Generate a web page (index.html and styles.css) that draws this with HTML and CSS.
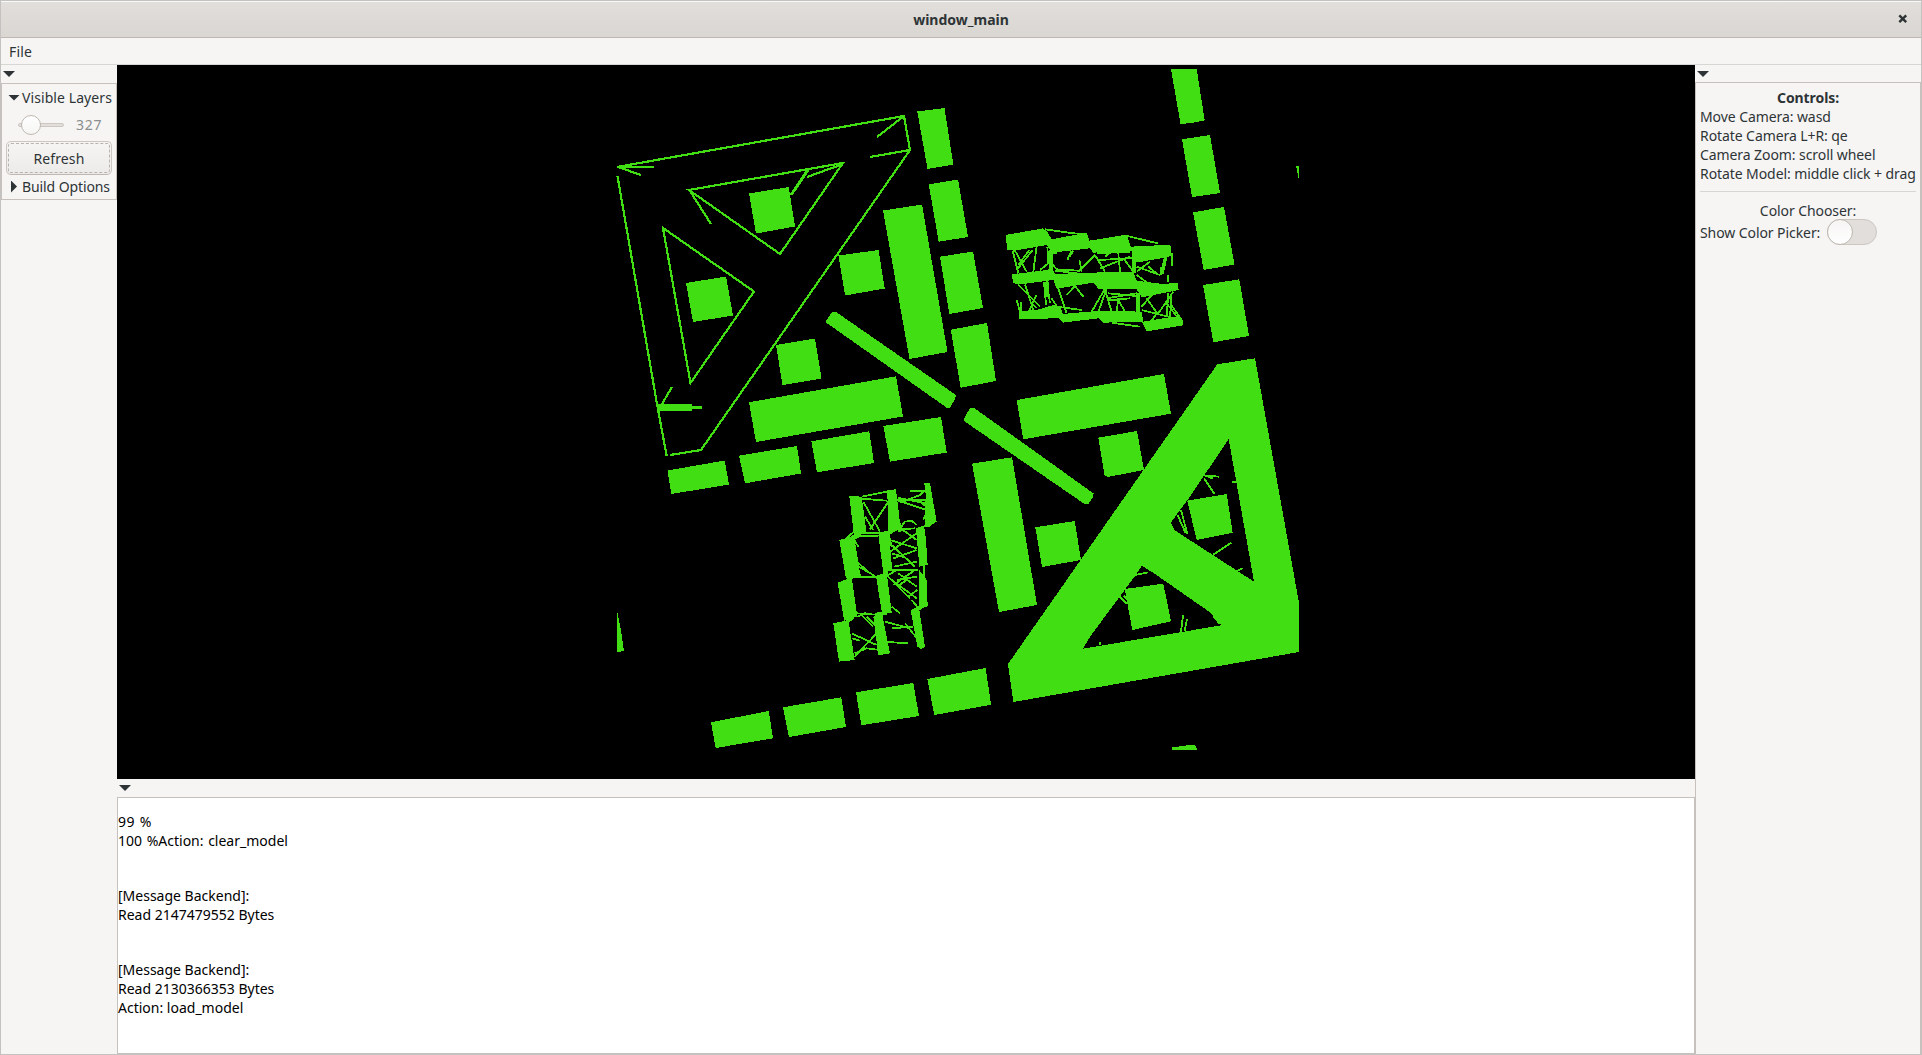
FILE: index.html
```
<!DOCTYPE html>
<html lang="en">
<head>
<meta charset="utf-8">
<title>window_main</title>
<link rel="stylesheet" href="styles.css">
</head>
<body>
<div class="window">
  <header class="titlebar">
    <h1 class="title">window_main</h1>
    <svg class="close" width="10" height="10" viewBox="0 0 10 10"><path d="M1.3 1.3 8.2 8.2M8.2 1.3 1.3 8.2"/></svg>
  </header>
  <nav class="menubar"><span class="menu-item">File</span></nav>
  <main class="body">
    <aside class="side left">
      <div class="expander"><i class="arrow down"></i></div>
      <section class="frame layers">
        <div class="row head"><i class="arrow down"></i><span class="t-layers">Visible Layers</span></div>
        <div class="row slider"><div class="trough"><i class="knob"></i></div><span class="value">327</span></div>
        <button class="button">Refresh</button>
        <div class="row build"><i class="arrow right"></i><span class="t-build">Build Options</span></div>
      </section>
    </aside>
    <div class="center">
      <svg class="viewport" viewBox="117 65 1578 714" width="1578" height="714" shape-rendering="crispEdges">
        <g class="solid">
          <path d="M749 193.500 788.700 187 795 226.500 756 233.500zM686 283 726 276.500 733 315.500 693 322zM838.500 255.500 878.500 250 884.700 288.500 845 295.500zM776 345 815 338.500 821.500 378.500 782.500 385z"/>
          <path d="M883 210.500 922 204.500 947.500 352 909.500 359zM749 402.300 896 376.300 903 416.500 756 442z"/>
          <path d="M667.500 470.500 724.700 460.500 729 484.500 671.300 494zM739 455.700 797 446 801 473.500 745 483.300zM811.300 441.300 869.300 431.300 874 463 817 472.300zM883.300 426 941 417 946.700 452.500 890 461.700z"/>
          <path d="M825.300 322 832 312 836 312 956 395 955 399 950 407.500 946.500 407.500zM964 418.500 970 408 974.500 408.300 1093.700 493.500 1093 497 1088.500 504 1084.500 504 964 421z"/>
          <path d="M917.300 111.500 944.500 108 953.300 164.500 927.500 169zM928.700 184.300 958 179.500 968 237 938.700 241.700zM940 256.700 973 251.500 983 308 949.300 314zM950.700 329.700 987 323 996 381 960.700 387.700z"/>
          <path d="M1171 69 1196.700 69 1204.700 120.300 1192 123 1180.500 124zM1182 139.300 1210 135 1220 193 1192 197zM1193 212.300 1224 207 1234.500 264.500 1203.700 270zM1203 285 1239.300 279.300 1249 336 1213.300 342.300z"/>
          <path d="M972 463.700 1012 457.300 1037 605 999 612zM1035.300 527.300 1074.700 521 1081 560 1042 567zM1016.700 400 1164 374 1171 413.700 1023.300 439.300zM1098.300 437.700 1137 431 1144 470 1107.700 477 1104.500 475z"/>
          <path d="M711 722.300 768.700 711 773 738.300 715.700 748zM783 707.300 841.300 697.300 846 727 789 737zM856 692.300 913.300 683 919 716 861.300 725.300zM927.300 679 985.700 668 991 704.700 934.300 715z"/>
          <path d="M617.300 612 621 630 624 651 617.300 652zM1296 166H1299V178H1298L1297 168H1296zM1172 747.500 1193 744.500 1196 746 1197 750 1172 750z"/>
          <path fill-rule="evenodd" d="M1217.300 364.300 1255 358.300 1299 603 1299 652 1013.300 702 1008 664zM1228.700 439 1254 581.700 1174.300 530 1170.700 522.700 1189 498zM1141.700 565.700 1155 574 1210 612.300 1221.300 625.300 1083 648.700 1090 636.700 1135 576z"/>
          <path d="M1187.300 500.700 1226.700 494 1232.700 532.700 1196.700 540zM1124.700 589 1163.300 583.700 1171 621.300 1132.300 630z"/>
          <path d="M657.500 404H692V406H701.500V409H692V410.500H657.500z"/>
        </g>
        <g class="wire">
          <path d="M617 167 904 116 910 150 701 450 670 455M666.700 456 657 404 617.500 176M618 167H654M618 167 641 175M904 116 877 137M910 150 870 157"/>
          <path d="M689 190 843 163 780 254zM690 191 711 224M843 164 807 177M663 228 754 291.500 690.500 383zM662 404 672 387"/>
          <path class="heavy" d="M808 170 791 195"/>
        </g>
        <g class="wire fine" transform="translate(1000 350) scale(.33333)">
          <path d="M605 376 658 380M620 378 640 386M612 385 644 433M543 480 562 552M533 495 556 548M640 614 694 578M710 663 728 655M696 396H708M405 675 445 667M358 738 380 762M372 738 382 748M549 796 543 845M561 808 554 843M640 800 660 822M300 876V886"/>
        </g>
        <g transform="translate(990 210) scale(.33333)">
          <path class="solid" d="M47 75 160 55 185 88 290 68 298 92 410 74 422 110 541 104 546 138 435 158 425 122 310 128 300 115 185 128 170 105 75 122 52 120zM67 193 170 180 185 172 195 192 300 188 430 185 440 212 520 222 563 218 566 240 455 262 440 238 325 236 310 218 200 236 190 210 85 224 68 218zM87 303 140 300 190 285 212 290 218 312 330 302 455 305 460 335 520 325 560 322 580 330 580 346 470 364 455 335 340 338 325 325 218 338 205 325 88 327z"/>
          <path class="wire fine" d="M165 58 250 70M165 60 180 85M250 70 285 72M412 78 503 100M68 122 85 190M75 122 110 185M128 120 80 180M118 120 85 165M140 108 130 185M172 110 175 160 150 180M185 130 200 130M185 160 200 178 265 182M245 122 232 150M250 122 238 142M268 150 275 185M315 135 265 185M315 135 345 185M320 130 420 125M325 150 425 145M330 175 420 140M345 140 360 128M385 130 390 185M400 145 430 185M440 170 510 195M440 185 480 155M475 170 505 195M525 140 512 195M530 140 520 185M545 130 546 168M440 155 525 140M535 195V215M440 195 475 220M195 182 260 190"/>
          <path class="wire fine" d="M85 224 150 290M105 224 130 300M80 270 90 305M92 275V305M140 255 118 300M125 280 140 295M162 215 168 285M170 212 180 280M205 235 230 310M185 265 200 288M230 255 255 228 280 260M200 290 275 300M345 236 305 305M350 236 325 305M345 240 365 305M355 250 440 258M350 265 440 250M350 272 420 265M385 265 380 305M385 270 405 305M455 290 490 250M470 265 505 315M550 245 505 310M535 250 530 320M545 250 540 320M540 280 575 330M530 280 565 325M455 300 575 330M480 340 500 310M365 338 450 350M445 215 500 232M470 240 490 220"/>
          <path class="wire thick" d="M182 120 184 190M432 120V190M445 250V310M170 215V260M516 170V192"/>
        </g>
        <g transform="translate(820 470) scale(.33333)">
          <path class="solid" d="M88 78 125 80 140 190 102 198zM58 210 102 198 122 320 78 325zM53 338 95 322 112 440 72 450zM40 460 85 450 104 570 57 575zM200 60 228 58 242 175 212 182zM175 195 205 183 217 300 190 310zM168 318 200 306 215 428 186 430zM160 440 186 430 210 550 175 556zM313 40 330 40 350 155 328 170 313 172 318 210 323 285 298 290 288 175 328 160zM298 300 320 330 323 408 298 420 315 530 303 537 292 530 272 420 298 408zM308 285H315V345H308z"/>
          <path class="wire fine" d="M125 80 205 64M125 86 200 92M205 95 150 178M130 95 180 185M135 140 160 180M208 100V185M135 190H180M75 208 102 185M80 215 100 195M102 200 175 197M100 205 115 230M122 320 108 285 165 318M110 275 150 310M95 322H165L190 315M112 440 138 428M72 450 112 430 180 435M125 435 160 470M140 440 165 465M95 490 170 525M95 505 120 512M170 490 104 560M104 550 140 535 180 540M185 470 165 490M228 90H320M235 84 320 100M235 92 335 125M270 62H320M240 98 300 75 315 62M300 95 325 115M320 125 310 150M240 175 255 155 275 152 290 165M215 180 285 175M242 175 290 210M205 190 215 230"/>
          <path class="wire fine" d="M210 210 290 235M210 245 290 190M215 225 285 290M220 265 290 240M215 250 255 262M222 290 290 275M200 300H295M205 315 230 300M215 330 290 385M220 345 285 300M235 310 290 350M230 330 290 320M260 330 230 350M265 380 292 360M205 320 270 385M215 410 240 430M195 455 270 475M215 475 280 470M255 460 295 510M185 515 265 520M275 390 300 420"/>
          <path class="wire thick" d="M228 140 240 185M320 90V170M176 195 215 185M212 185 245 165M182 190 200 320M120 195 95 205M100 315 85 330M100 440 80 455M165 435 200 428"/>
        </g>
      </svg>
      <div class="expander console-head"><i class="arrow down"></i></div>
      <div class="console">
        <p class="percent">99 %</p>
        <p class="clear">100 %Action: clear_model</p>
        <p class="gap">[Message Backend]:</p>
        <p>Read 2147479552 Bytes</p>
        <p class="gap">[Message Backend]:</p>
        <p>Read 2130366353 Bytes</p>
        <p>Action: load_model</p>
      </div>
    </div>
    <aside class="side right-side">
      <div class="expander"><i class="arrow down"></i></div>
      <section class="frame controls">
        <h2>Controls:</h2>
        <p>Move Camera: wasd</p>
        <p>Rotate Camera L+R: qe</p>
        <p>Camera Zoom: scroll wheel</p>
        <p>Rotate Model: middle click + drag</p>
        <hr>
        <p class="chooser">Color Chooser:</p>
        <div class="row picker"><span>Show Color Picker:</span><div class="switch"><i></i></div></div>
      </section>
    </aside>
  </main>
</div>
</body>
</html>
```
FILE: styles.css
```
* { box-sizing: border-box; margin: 0; padding: 0; }
body {
  width: 1922px; height: 1055px; overflow: hidden;
  font: 14px/19px "Noto Sans", "Open Sans", sans-serif;
  color: #2e3436; background: #f6f5f4;
}
p, span, h1, h2 { white-space: nowrap; }
.window { height: 1055px; display: flex; flex-direction: column; border: 1px solid #c3c2c1; }
.titlebar {
  height: 37px; display: flex; align-items: center; justify-content: center; position: relative;
  background: linear-gradient(#e1dedb, #dad6d2);
  border-top: 1px solid #f9f8f8; border-bottom: 1px solid #bfb8b1;
}
.title { font-size: 14px; font-weight: 700; }
.close { position: absolute; right: 13px; top: 12px; fill: none; stroke: #2e3436; stroke-width: 2.4; }
.menubar { height: 27px; padding: 4px 8px; border-bottom: 1px solid #d8d6d4; }
.menu-item { display: block; letter-spacing: .15px; }
.body { flex: 1; display: flex; min-height: 0; }
.side { display: flex; flex-direction: column; }
.left { width: 116px; }
.right-side { width: 226px; }
.expander { height: 18px; padding: 6px 0 0 2px; }
.arrow { display: block; flex: none; background: #2e3436; }
.arrow.down { width: 12px; height: 6px; clip-path: polygon(0 0, 100% 0, 50% 100%); }
.arrow.right { width: 6px; height: 12px; clip-path: polygon(0 0, 100% 50%, 0 100%); }
.frame { border: 1px solid #c6c1bc; }
.row { display: flex; align-items: center; }
.layers { height: 117px; padding: 4px 4px 2px; display: flex; flex-direction: column; }
.head { height: 20px; padding: 0 0 1px 2px; gap: 2px; letter-spacing: .08px; }
.slider { height: 33px; padding-left: 12px; gap: 12px; }
.trough { position: relative; width: 46px; height: 4px; border-radius: 2px; background: #e1dedb; border: 1px solid #cdc7c2; }
.knob {
  position: absolute; left: 2px; top: -9px; width: 20px; height: 20px; border-radius: 50%;
  border: 1px solid #bfb8b1; background: linear-gradient(#fff, #f6f5f4);
}
.value { color: #8b8e8f; letter-spacing: .8px; }
.button {
  height: 34px; width: 106px; font: inherit; color: inherit; letter-spacing: .1px;
  border: 1px solid #cdc7c2; border-bottom-color: #bfb8b1; border-radius: 5px;
  background: linear-gradient(#f6f5f4, #edebe9); outline: 1px dashed #b6b4b2; outline-offset: -3px;
}
.build { height: 22px; padding: 1px 0 0 5px; gap: 5px; letter-spacing: -.1px; }
.center { width: 1578px; display: flex; flex-direction: column; }
.viewport { display: block; flex: none; background: #000; }
.solid { fill: #41de14; }
.wire { fill: none; stroke: #41de14; stroke-width: 2.2; }
.wire .heavy { stroke-width: 3; }
.fine { stroke-width: 5.4; }
.thick { stroke-width: 12; }
.console {
  flex: 1; padding: 14px 0 0; color: #000; background: #fff; border: 1px solid #c6c1bc;
}
.percent { word-spacing: 1px; letter-spacing: .4px; }
.clear { word-spacing: 1px; }
.gap { margin-top: 36px; }
.controls { flex: none; height: 972px; padding: 5px 4px 0; border-bottom: 0; letter-spacing: -.08px; }
h2 { font-size: 14px; font-weight: 700; text-align: center; }
hr { border: 0; border-top: 1px solid #d8d6d4; margin: 8px 0 9px; }
.chooser { text-align: center; margin-bottom: -1px; }
.picker { gap: 7px; height: 26px; }
.switch { width: 50px; height: 26px; border: 1px solid #cdc7c2; border-radius: 13px; background: #e1dedb; }
.switch i { display: block; margin: -1px; width: 26px; height: 26px; border: 1px solid #bfb8b1; border-radius: 50%; background: linear-gradient(#f6f5f4, #fff); }
```
